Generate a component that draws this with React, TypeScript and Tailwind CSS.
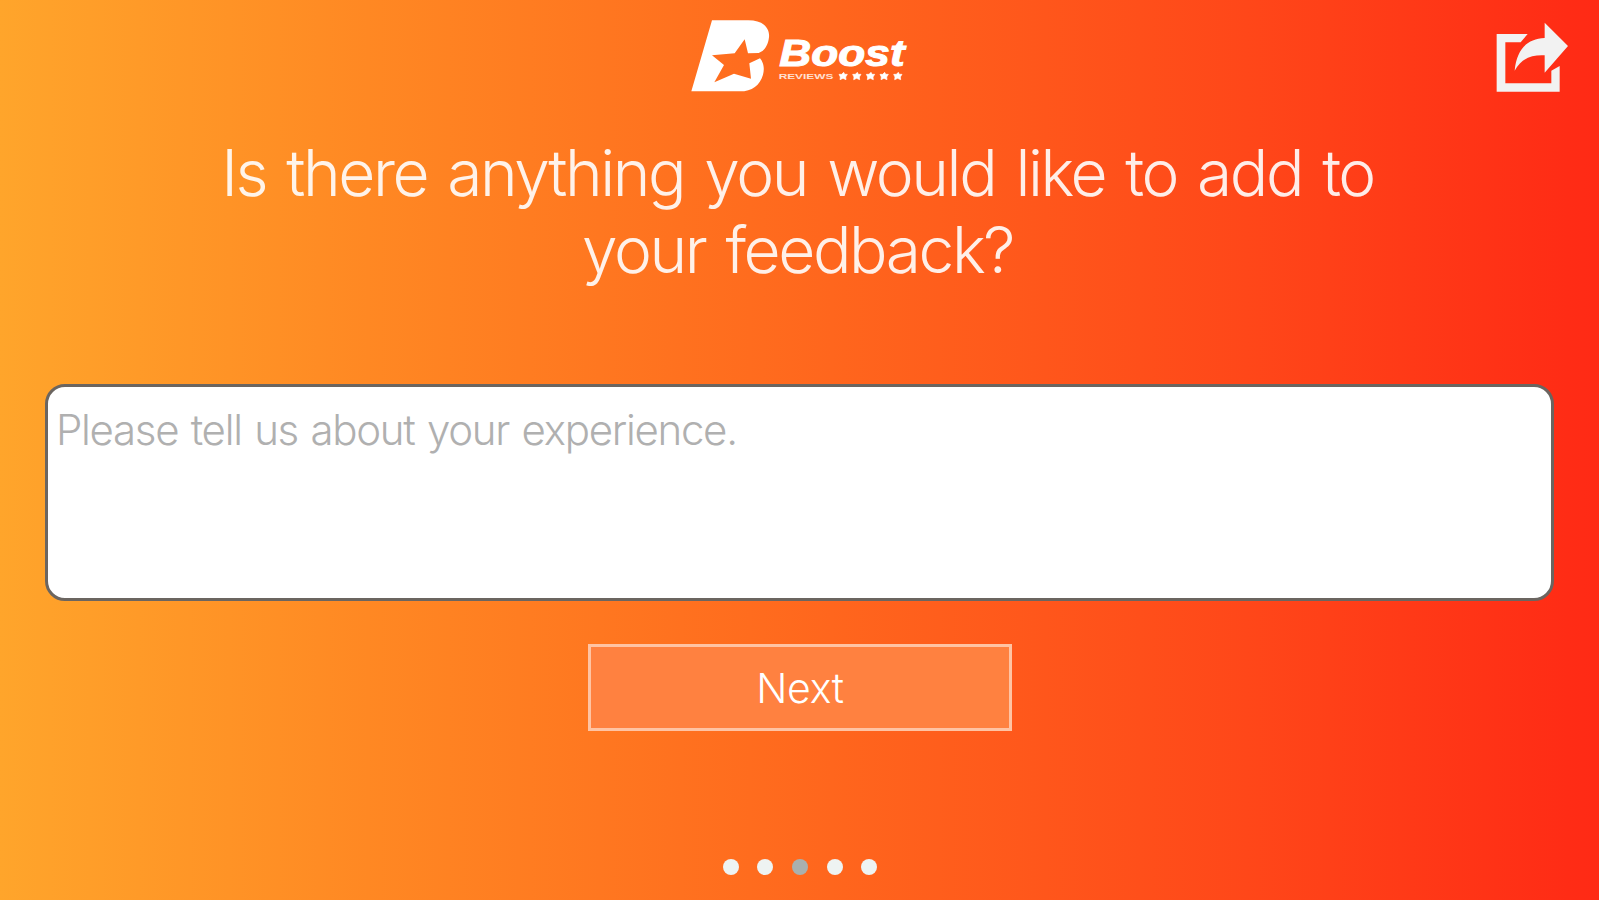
import { useState } from "react";

const steps = [1, 2, 3, 4, 5];

function BoostLogo() {
  return (
    <svg viewBox="0 0 720 270" className="h-[90px] w-[240px]" fill="white">
      <path d="M96 31 H205 C248 31 270 52 267 82 C264 108 252 124 236 129 L204 130 L194 88 L164 130 L96 136 L132 165 L103 217 L162 191 L213 206 L208 160 L240 145 C251 158 254 176 249 194 C240 226 216 244 180 244 H34 Z" />
      <text x="298" y="167" fontFamily="Liberation Sans, sans-serif" fontSize="110" fontWeight="700" fontStyle="italic" textLength="376" lengthAdjust="spacingAndGlyphs" stroke="white" strokeWidth="3">
        Boost
      </text>
      <text x="296" y="207" fontFamily="Liberation Sans, sans-serif" fontSize="24" fontWeight="700" textLength="164" lengthAdjust="spacingAndGlyphs" opacity="0.8">
        REVIEWS
      </text>
      {[489, 530, 571, 612, 653].map((x) => (
        <path
          key={x}
          transform={`translate(${x} 198)`}
          d="M2 -11 L5 -5 L13 -5 L8 3 L9 11 L0 7 L-9 11 L-8 3 L-12 -5 L-4 -5 Z"
          stroke="white"
          strokeWidth="2"
        />
      ))}
    </svg>
  );
}

function ShareIcon() {
  return (
    <svg viewBox="0 0 357 300" className="h-[100px] w-[119px]" fill="#f2f2f2">
      <path d="M50 72 H143 L122 97 H76 V220 H214 V182 L239 168 V245 H50 Z" />
      <path d="M194 38 L264 108 L194 188 V136 C155 134 125 145 104 182 C110 120 140 86 194 84 Z" />
    </svg>
  );
}

export default function App() {
  const [feedback, setFeedback] = useState("");

  return (
    <div className="flex h-[900px] w-full flex-col items-center overflow-hidden bg-[linear-gradient(to_right,#ffa52b_0%,#ff8823_23%,#ff661d_52%,#ff4719_78%,#ff2c15_98%,#ff2a15_100%)] font-['Inter',sans-serif] font-light">
      <header className="grid w-full grid-cols-[1fr_240px_1fr] pt-2.5">
        <div />
        <BoostLogo />
        <div className="flex justify-end">
          <ShareIcon />
        </div>
      </header>

      <h1 className="mt-6 pr-1 text-center text-[64px] leading-[77px] font-[350] tracking-[-2.4px] text-white/90 [word-spacing:4.5px]">
        Is there anything you would like to add to
        <br />
        your feedback?
      </h1>

      <textarea
        value={feedback}
        onChange={(e) => setFeedback(e.target.value)}
        placeholder="Please tell us about your experience."
        className="mt-24 h-[217px] w-[1509px] shrink-0 resize-none rounded-[20px] border-[3px] border-[#6b6560] bg-white px-2 pt-[11px] text-[42px] tracking-[-1.3px] [word-spacing:2px] placeholder:text-[#b0b0b0]"
      />

      <button className="mt-[43px] ml-px h-[87px] w-[424px] shrink-0 border-3 border-[#ffc3a3] bg-[#ff8140] pt-0.5 text-[41px] font-[350] tracking-[-0.3px] text-white">
        Next
      </button>

      <div className="mt-[128px] ml-px flex gap-[18.7px]">
        {steps.map((step) => (
          <span
            key={step}
            className={step === 3 ? "size-4 rounded-full bg-[#a9b0ae]" : "size-4 rounded-full bg-[#eef3f2]"}
          />
        ))}
      </div>
    </div>
  );
}
